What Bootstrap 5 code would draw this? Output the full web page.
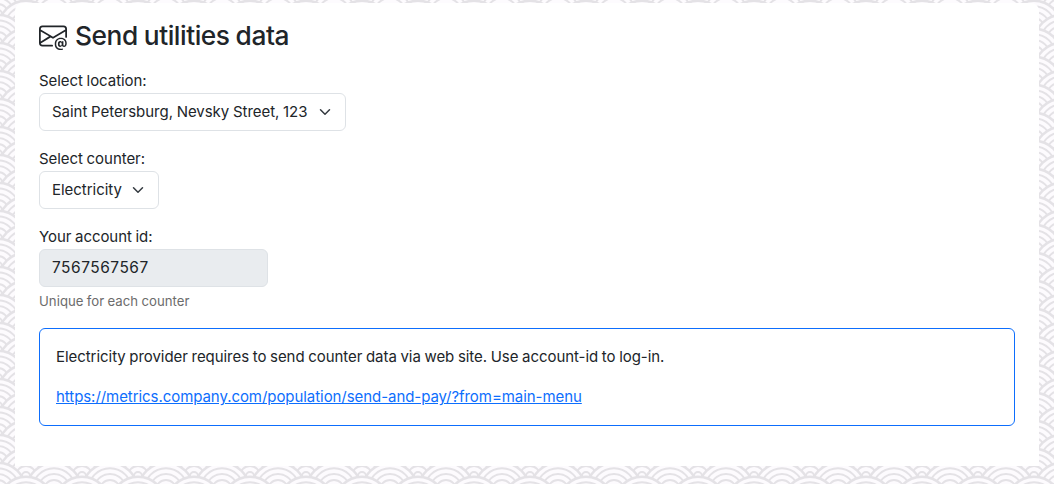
<!DOCTYPE html>
<html lang="en">
<head>
<meta charset="utf-8">
<meta name="viewport" content="width=device-width, initial-scale=1">
<title>Send utilities data</title>
<link rel="stylesheet" href="https://cdn.jsdelivr.net/npm/bootstrap@5.3.0/dist/css/bootstrap.min.css">
<style>
body{font-family:Inter,"Liberation Sans",sans-serif;color:#212529;position:relative;height:484px;overflow:hidden;font-size:15px;line-height:24px;letter-spacing:-.05px;word-spacing:-.5px}
.waves{position:absolute;inset:0;width:100%;height:100%;z-index:-1}
.sheet{margin:3px 15px 0;padding:17px 24px 0;height:463px;border-radius:8px 8px 0 0}
.page-title{font-size:26.3px;line-height:32px;letter-spacing:-.45px;margin:0;padding-bottom:1px}
.picker{height:38px;font-size:15px;line-height:24px;color:#212529;letter-spacing:-.03px;word-spacing:inherit;padding:6px 14px 6px 12px;white-space:nowrap}
.picker-location{width:307px}
.picker-counter{width:120px}
.account{width:229px;height:38px;font-size:15.5px;letter-spacing:.5px;padding-bottom:8px;background:#e9ecef}
.hint{font-size:13.2px;line-height:21px;letter-spacing:.03px;color:#6c6c6c}
.notice{height:98px}
.notice a{letter-spacing:-.06px}
</style>
</head>
<body>
<svg class="waves" aria-hidden="true">
<defs>
<g id="fan" fill="#fdfbfe" stroke="#e4e2e6" stroke-width="1.9"><circle r="27.3" stroke-width="2.4"/><circle r="21.7"/><circle r="16"/><circle r="10"/><circle r="4"/></g>
<pattern id="scales" width="56" height="28" patternUnits="userSpaceOnUse" x="26" y="476">
<use href="#fan" x="0" y="0"/><use href="#fan" x="56" y="0"/><use href="#fan" x="28" y="14"/><use href="#fan" x="0" y="28"/><use href="#fan" x="56" y="28"/><use href="#fan" x="28" y="42"/><use href="#fan" x="0" y="56"/><use href="#fan" x="56" y="56"/>
</pattern>
</defs>
<rect width="100%" height="100%" fill="url(#scales)"/>
</svg>
<main class="sheet bg-white">
<h1 class="page-title d-flex align-items-center gap-2">
<svg width="28" height="28" viewBox="0 0 16 16" fill="currentColor" aria-hidden="true"><path d="M2 2a2 2 0 0 0-2 2v8.01A2 2 0 0 0 2 14h5.5a.5.5 0 0 0 0-1H2a1 1 0 0 1-.966-.741l5.64-3.471L8 9.583l7-4.2V8.5a.5.5 0 0 0 1 0V4a2 2 0 0 0-2-2H2Zm3.708 6.208L1 11.105V5.383l4.708 2.825ZM1 4.217V4a1 1 0 0 1 1-1h12a1 1 0 0 1 1 1v.217l-7 4.2-7-4.2Z"/><path d="M14.247 14.269c1.01 0 1.587-.857 1.587-2.025v-.21C15.834 10.43 14.64 9 12.52 9h-.035C10.42 9 9 10.36 9 12.432v.214C9 14.82 10.438 16 12.358 16h.044c.594 0 1.018-.074 1.237-.175v-.73c-.245.11-.673.18-1.18.18h-.044c-1.334 0-2.571-.788-2.571-2.655v-.157c0-1.657 1.058-2.724 2.64-2.724h.04c1.535 0 2.484 1.05 2.484 2.326v.118c0 .975-.324 1.39-.639 1.39-.232 0-.41-.148-.41-.42v-2.19h-.906v.569h-.03c-.084-.298-.368-.63-.954-.63-.778 0-1.259.555-1.259 1.4v.528c0 .892.49 1.434 1.26 1.434.471 0 .896-.227 1.014-.643h.043c.118.42.617.648 1.12.648Zm-2.453-1.588v-.227c0-.546.227-.791.573-.791.297 0 .572.192.572.708v.367c0 .573-.253.744-.564.744-.354 0-.581-.215-.581-.8Z"/></svg>
<span>Send utilities data</span></h1>
<div class="mt-3">Select location:</div>
<button type="button" class="picker picker-location btn border d-flex align-items-center justify-content-between">Saint Petersburg, Nevsky Street, 123<svg width="12" height="12" viewBox="0 0 16 16" fill="none" stroke="#343a40" stroke-width="2" stroke-linecap="round" stroke-linejoin="round"><path d="m2 5 6 6 6-6"/></svg></button>
<div class="mt-3">Select counter:</div>
<button type="button" class="picker picker-counter btn border d-flex align-items-center justify-content-between">Electricity<svg width="12" height="12" viewBox="0 0 16 16" fill="none" stroke="#343a40" stroke-width="2" stroke-linecap="round" stroke-linejoin="round"><path d="m2 5 6 6 6-6"/></svg></button>
<div class="mt-3">Your account id:</div>
<input class="account form-control" value="7567567567" disabled>
<div class="hint mt-1">Unique for each counter</div>
<div class="notice border border-primary rounded p-3 mt-3">Electricity provider requires to send counter data via web site. Use account-id to log-in.<div class="mt-3"><a href="#">https://metrics.company.com/population/send-and-pay/?from=main-menu</a></div></div>
</main>
<script src="https://cdn.jsdelivr.net/npm/bootstrap@5.3.0/dist/js/bootstrap.bundle.min.js"></script>
</body>
</html>
